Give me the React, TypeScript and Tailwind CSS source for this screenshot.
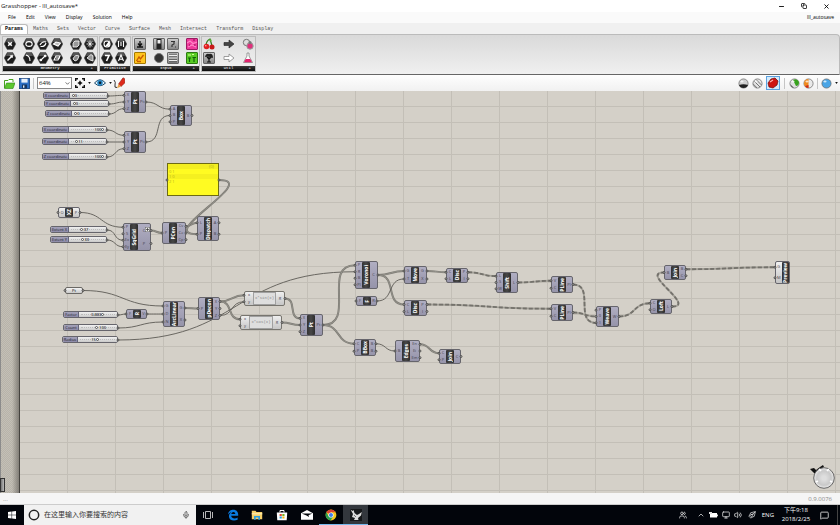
import { useState } from "react";
import type { ReactNode } from "react";
import { Mic, Minus, Copy, X, ChevronUp, Monitor, Volume2, PenTool, MessageSquare, Users } from "lucide-react";

type GhNode = {
    id: string;
    x: number;
    y: number;
    w: number;
    h: number;
    label: string;
    ins: string[];
    outs: string[];
    kind?: "light" | "expr" | "param" | "ghost";
};

type GhSlider = {
    id: string;
    x: number;
    y: number;
    w: number;
    label: string;
    labelClass: string;
    value: string;
    pos: number;
    side: "left" | "right";
};

const nodes: GhNode[] = [
    { id: "pt1", x: 124, y: 0, w: 22, h: 22, label: "Pt", ins: ["X", "Y", "Z"], outs: ["Pt"] },
    { id: "box", x: 170, y: 14, w: 22, h: 21, label: "Box", ins: ["A", "B", "P"], outs: ["B"] },
    { id: "pt2", x: 124, y: 40, w: 22, h: 22, label: "Pt", ins: ["X", "Y", "Z"], outs: ["Pt"] },
    { id: "xz", x: 58, y: 116, w: 22, h: 11, label: "XZ", ins: ["O"], outs: ["P"], kind: "light" },
    { id: "sqgrid", x: 123, y: 132, w: 28, h: 28, label: "SqGrid", ins: ["P", "S", "Ex", "Ey"], outs: ["C", "P"] },
    { id: "pcen", x: 162, y: 131, w: 24, h: 22, label: "PCen", ins: ["P"], outs: ["Cv", "Ce", "Cp"] },
    { id: "dispatch", x: 197, y: 125, w: 22, h: 25, label: "Dispatch", ins: ["L", "P"], outs: ["A", "B"] },
    { id: "ptparam", x: 65, y: 196, w: 18, h: 7, label: "Pt", ins: [""], outs: [""], kind: "param" },
    { id: "r", x: 126, y: 218, w: 21, h: 10, label: "R", ins: ["F"], outs: ["V"] },
    { id: "arc", x: 163, y: 210, w: 22, h: 26, label: "ArcLinear", ins: ["G", "D", "N"], outs: ["G", "X"] },
    { id: "decon", x: 198, y: 206, w: 22, h: 23, label: "pDecon", ins: ["P"], outs: ["X", "Y", "Z"] },
    { id: "sin", x: 244, y: 200, w: 41, h: 15, label: "x*sin(x)", ins: ["x", "y"], outs: ["R"], kind: "expr" },
    { id: "cos", x: 240, y: 224, w: 42, h: 15, label: "x*cos(x)", ins: ["x", "y"], outs: ["R"], kind: "expr" },
    { id: "pt3", x: 300, y: 223, w: 23, h: 22, label: "Pt", ins: ["X", "Y", "Z"], outs: ["Pt"] },
    { id: "voronoi", x: 355, y: 170, w: 23, h: 28, label: "Voronoi", ins: ["P", "R", "B", "Pl"], outs: ["C"] },
    { id: "f", x: 356, y: 205, w: 21, h: 10, label: "F", ins: ["F"], outs: ["R"] },
    { id: "bbox", x: 354, y: 248, w: 22, h: 17, label: "BBox", ins: ["C", "P"], outs: ["B", "B"] },
    { id: "move", x: 404, y: 175, w: 23, h: 18, label: "Move", ins: ["G", "T"], outs: ["G", "X"] },
    { id: "disc1", x: 446, y: 177, w: 22, h: 15, label: "Disc", ins: ["C", "L"], outs: ["P", "I"] },
    { id: "disc2", x: 404, y: 209, w: 23, h: 16, label: "Disc", ins: ["C", "L"], outs: ["P", "I"] },
    { id: "shift", x: 496, y: 181, w: 22, h: 21, label: "Shift", ins: ["L", "S", "W"], outs: ["L"] },
    { id: "edges", x: 395, y: 249, w: 25, h: 22, label: "Edges", ins: ["B"], outs: ["En", "Ei", "Em"] },
    { id: "join1", x: 439, y: 258, w: 22, h: 15, label: "Join", ins: ["C", "P"], outs: ["C"] },
    { id: "pl1", x: 551, y: 185, w: 22, h: 17, label: "PLine", ins: ["V", "C"], outs: ["Pl"] },
    { id: "pl2", x: 551, y: 213, w: 22, h: 17, label: "PLine", ins: ["V", "C"], outs: ["Pl"] },
    { id: "weave", x: 596, y: 215, w: 23, h: 21, label: "Weave", ins: ["P", "0", "1"], outs: ["W"] },
    { id: "loft", x: 650, y: 208, w: 22, h: 15, label: "Loft", ins: ["C", "O"], outs: ["L"] },
    { id: "join2", x: 664, y: 174, w: 22, h: 15, label: "Join", ins: ["B"], outs: ["B", "C"] },
    { id: "preview", x: 775, y: 170, w: 15, h: 23, label: "Preview", ins: ["G", "M"], outs: [], kind: "ghost" },
];

const sliders: GhSlider[] = [
    { id: "s1", x: 43, y: 1, w: 65, label: "X coordinate", labelClass: "w-[26px]", value: "0", pos: 5, side: "right" },
    { id: "s2", x: 44, y: 9, w: 65, label: "Y coordinate", labelClass: "w-[26px]", value: "0", pos: 5, side: "right" },
    { id: "s3", x: 45, y: 19, w: 64, label: "Z coordinate", labelClass: "w-[26px]", value: "0", pos: 6, side: "right" },
    { id: "s4", x: 42, y: 35, w: 65, label: "X coordinate", labelClass: "w-[26px]", value: "100", pos: 93, side: "left" },
    { id: "s5", x: 42, y: 47, w: 65, label: "Y coordinate", labelClass: "w-[26px]", value: "11", pos: 17, side: "right" },
    { id: "s6", x: 42, y: 62, w: 65, label: "Z coordinate", labelClass: "w-[26px]", value: "100", pos: 93, side: "left" },
    { id: "s7", x: 50, y: 135, w: 57, label: "Extent X", labelClass: "w-[18px]", value: "37", pos: 32, side: "right" },
    { id: "s8", x: 50, y: 145, w: 57, label: "Extent Y", labelClass: "w-[18px]", value: "33", pos: 34, side: "right" },
    { id: "s9", x: 63, y: 220, w: 55, label: "Factor", labelClass: "w-[15px]", value: "0.883", pos: 64, side: "left" },
    { id: "s10", x: 63, y: 233, w: 55, label: "Count", labelClass: "w-[15px]", value: "100", pos: 45, side: "right" },
    { id: "s11", x: 62, y: 245, w: 56, label: "Radius", labelClass: "w-[15px]", value: "15", pos: 51, side: "left" },
];

// [source, output index, target, input index, style]
const wires: [string, number, string, number, ("thin" | "list" | "tree")?][] = [
    ["s1", 0, "pt1", 0],
    ["s2", 0, "pt1", 1],
    ["s3", 0, "pt1", 2],
    ["s4", 0, "pt2", 0],
    ["s5", 0, "pt2", 1],
    ["s6", 0, "pt2", 2],
    ["pt1", 0, "box", 0],
    ["pt2", 0, "box", 1],
    ["xz", 0, "sqgrid", 0],
    ["s7", 0, "sqgrid", 2],
    ["s8", 0, "sqgrid", 3],
    ["sqgrid", 0, "pcen", 0, "list"],
    ["pcen", 0, "dispatch", 0, "list"],
    ["panel", 0, "dispatch", 1, "list"],
    ["ptparam", 0, "arc", 0],
    ["s9", 0, "r", 0],
    ["r", 0, "arc", 1],
    ["s10", 0, "arc", 2],
    ["arc", 0, "decon", 0, "list"],
    ["decon", 0, "sin", 0, "list"],
    ["decon", 2, "sin", 1],
    ["decon", 0, "cos", 0, "list"],
    ["s11", 0, "voronoi", 1],
    ["sin", 0, "pt3", 0, "list"],
    ["cos", 0, "pt3", 1, "list"],
    ["pt3", 0, "voronoi", 0, "list"],
    ["pt3", 0, "bbox", 0, "list"],
    ["voronoi", 0, "move", 0, "list"],
    ["voronoi", 0, "disc2", 0, "list"],
    ["f", 0, "move", 1],
    ["move", 0, "disc1", 0, "list"],
    ["disc1", 0, "shift", 0, "tree"],
    ["disc2", 0, "pl2", 0, "tree"],
    ["shift", 0, "pl1", 0, "tree"],
    ["pl1", 0, "weave", 2, "tree"],
    ["pl2", 0, "weave", 1, "tree"],
    ["weave", 0, "loft", 0, "tree"],
    ["loft", 0, "join2", 0, "tree"],
    ["join2", 0, "preview", 0, "tree"],
    ["bbox", 0, "edges", 0],
    ["edges", 0, "join1", 0, "list"],
];

const panel = { x: 167, y: 72, w: 52, h: 33 };

function portY(y: number, h: number, i: number, n: number) {
    return y + 1 + ((h - 2) * (i + 0.5)) / n;
}

function outPort(id: string, i: number): [number, number] {
    if (id === "panel") return [panel.x + panel.w, panel.y + 17];
    const s = sliders.find((v) => v.id === id);
    if (s) return [s.x + s.w, s.y + 4];
    const n = nodes.find((v) => v.id === id)!;
    return [n.x + n.w, portY(n.y, n.h, i, n.outs.length)];
}

function inPort(id: string, i: number): [number, number] {
    const n = nodes.find((v) => v.id === id)!;
    return [n.x, portY(n.y, n.h, i, n.ins.length)];
}

function wirePath([x1, y1]: [number, number], [x2, y2]: [number, number]) {
    const dist = Math.hypot(x2 - x1, y2 - y1);
    const c = x2 < x1 ? dist * 0.72 : dist * 0.5;
    return `M${x1} ${y1}C${x1 + c} ${y1} ${x2 - c} ${y2} ${x2} ${y2}`;
}

function Wires() {
    return (
        <svg className="absolute inset-0 w-full h-full" fill="none" stroke="#5c5a55">
            {wires.map(([a, ai, b, bi, style], i) => {
                const d = wirePath(outPort(a, ai), inPort(b, bi));
                if (style === "tree")
                    return (
                        <g key={i}>
                            <path d={d} stroke="#a3a098" strokeWidth="1.8" />
                            <path d={d} stroke="#74726c" strokeWidth="1.8" strokeDasharray="4 2" />
                        </g>
                    );
                if (style === "list")
                    return (
                        <g key={i}>
                            <path d={d} stroke="#7b7973" strokeWidth="2" />
                            <path d={d} stroke="#a5a29a" strokeWidth="0.6" />
                        </g>
                    );
                return <path key={i} d={d} strokeWidth="0.9" />;
            })}
        </svg>
    );
}

function Ports() {
    const points: [number, number][] = [
        [panel.x, panel.y + 17],
        [panel.x + panel.w, panel.y + 17],
    ];
    sliders.forEach((s) => points.push(outPort(s.id, 0)));
    nodes.forEach((n) => {
        n.ins.forEach((_, i) => points.push(inPort(n.id, i)));
        n.outs.forEach((_, i) => points.push(outPort(n.id, i)));
    });
    return (
        <svg className="absolute inset-0 w-full h-full" fill="#b9b7b2" stroke="#3c3c3c" strokeWidth="0.8">
            {points.map(([x, y], i) => (
                <circle key={i} cx={x} cy={y} r="1" />
            ))}
        </svg>
    );
}

function PortNames({ names, className }: { names: string[]; className: string }) {
    return (
        <div className={`flex flex-col text-[4px] leading-[4px] text-[#45434f] ${className}`}>
            {names.map((name, i) => (
                <span key={i} className="flex-1 flex items-center justify-center">
                    {name}
                </span>
            ))}
        </div>
    );
}

function Component({ node }: { node: GhNode }) {
    const box = { left: node.x, top: node.y, width: node.w, height: node.h };
    if (node.kind === "param")
        return (
            <div
                style={box}
                className="absolute flex items-center justify-center rounded-[2px] border border-[#6b6965] bg-gradient-to-b from-[#f4f4f4] to-[#c9c9c9] text-[4px] leading-[4px]"
            >
                {node.label}
            </div>
        );
    if (node.kind === "expr")
        return (
            <div style={box} className="absolute flex rounded-[2px] border border-[#77756f] bg-gradient-to-b from-[#efefef] to-[#c6c6c6]">
                <PortNames names={node.ins} className="w-2" />
                <div className="flex-1 flex items-center justify-center border border-[#a0a0a0] bg-[#dedede] text-[4px] leading-[5px] text-[#888] font-['Liberation_Mono',monospace]">
                    {node.label}
                </div>
                <PortNames names={node.outs} className="w-2" />
            </div>
        );
    const light = node.kind === "light" || node.kind === "ghost";
    return (
        <div
            style={box}
            className={`absolute flex rounded-[2px] border border-[#66656c] bg-gradient-to-b ${light ? "from-[#f2f2f2] to-[#c4c4c4]" : "from-[#b0aec2] to-[#9694aa]"}`}
        >
            <PortNames names={node.ins} className="w-[6px]" />
            <div className="w-2 flex items-center justify-center overflow-hidden rounded-[1px] bg-gradient-to-r from-[#333] via-[#484848] to-[#2c2c2c] text-white font-bold text-[5px] leading-[6px]">
                <span className="[writing-mode:vertical-rl] rotate-180 whitespace-nowrap">{node.label}</span>
            </div>
            <PortNames names={node.outs} className="flex-1" />
        </div>
    );
}

function NumberSlider({ slider }: { slider: GhSlider }) {
    const [pos, setPos] = useState(slider.pos);
    return (
        <div
            style={{ left: slider.x, top: slider.y, width: slider.w }}
            className="absolute h-[7px] flex rounded-[2px] border border-[#66656c] bg-[#dcdcdc] overflow-hidden"
        >
            <label
                htmlFor={slider.id}
                className={`${slider.labelClass} shrink-0 flex items-center justify-center border-r border-[#66657a] bg-gradient-to-b from-[#a3a1b8] to-[#8d8ba8] text-[4px] leading-[5px] text-[#23222d] whitespace-nowrap`}
            >
                {slider.label}
            </label>
            <div className="relative flex-1 bg-gradient-to-b from-[#f1f1f1] to-[#cacaca]">
                <div className="absolute inset-x-0.5 top-0.5 border-t border-dotted border-[#bbb]" />
                <input
                    id={slider.id}
                    type="range"
                    value={pos}
                    onChange={(e) => setPos(Number(e.target.value))}
                    className="absolute inset-0 w-full h-[5px] appearance-none bg-transparent [&::-webkit-slider-thumb]:appearance-none [&::-webkit-slider-thumb]:w-[3px] [&::-webkit-slider-thumb]:h-[3px] [&::-webkit-slider-thumb]:rounded-full [&::-webkit-slider-thumb]:border [&::-webkit-slider-thumb]:border-[#555] [&::-webkit-slider-thumb]:bg-white"
                />
                <span
                    style={slider.side === "right" ? { left: `calc(${pos}% + 3px)` } : { right: `calc(${100 - pos}% + 2px)` }}
                    className="absolute inset-y-0 text-[4px] leading-[5px] text-black pointer-events-none"
                >
                    {slider.value}
                </span>
            </div>
        </div>
    );
}

function Canvas() {
    return (
        <main className="relative flex-1 min-h-0 overflow-hidden bg-[#d4d0c8] text-black">
            <svg className="absolute inset-0 w-full h-full">
                <defs>
                    <pattern id="grid" x="67" y="15" width="48" height="16" patternUnits="userSpaceOnUse">
                        <path d="M.5 0V16M0 .5H48" stroke="#c3bfb7" fill="none" />
                    </pattern>
                    <pattern id="weave" width="2" height="2" patternUnits="userSpaceOnUse">
                        <path d="M0 0H1V1H0ZM1 1H2V2H1Z" fill="#aba79e" />
                    </pattern>
                    <linearGradient id="edge">
                        <stop offset="0" stopColor="#6f6c66" stopOpacity="0" />
                        <stop offset="1" stopColor="#6f6c66" stopOpacity="0.85" />
                    </linearGradient>
                </defs>
                <rect width="100%" height="100%" fill="url(#grid)" />
                <rect width="20" height="100%" fill="#c3bfb6" />
                <rect width="20" height="100%" fill="url(#weave)" opacity="0.5" />
                <rect x="12" width="8" height="100%" fill="url(#edge)" />
                <rect x="19" width="1" height="100%" fill="#45433f" />
                <rect width="1" height="100%" fill="#8b8b8b" />
            </svg>
            <Wires />
            {sliders.map((s) => (
                <NumberSlider key={s.id} slider={s} />
            ))}
            {nodes.map((n) => (
                <Component key={n.id} node={n} />
            ))}
            <div
                style={{ left: panel.x, top: panel.y, width: panel.w, height: panel.h }}
                className="absolute border border-[#6d6a14] bg-[#fffb22] text-[4px] leading-[5px] text-[#b5b01c]"
            >
                <p className="pr-1 text-right bg-[#f3ee20]">{"{0}"}</p>
                <p className="pl-px">0 1</p>
                <p className="pl-px bg-[#f5f020]">1 0</p>
                <p className="pl-px">2 1</p>
            </div>
            <svg className="absolute left-[145px] top-[136px] w-[5px] h-[5px]" viewBox="0 0 5 5">
                <rect width="5" height="5" fill="#eee" stroke="#555" />
                <path d="M2.5 1V4M1 2.5H4" stroke="#333" strokeWidth=".7" />
            </svg>
            <Ports />
            <div className="absolute left-0 bottom-px w-[5px] h-[14px] border border-[#333] bg-gradient-to-r from-[#777] to-[#bbb]" />
            <svg className="absolute right-1 bottom-[3px] w-[26px] h-[26px]" viewBox="0 0 26 26">
                <defs>
                    <radialGradient id="dial">
                        <stop offset="0.2" stopColor="#dedede" />
                        <stop offset="0.7" stopColor="#c9c9c9" />
                        <stop offset="1" stopColor="#ededed" />
                    </radialGradient>
                </defs>
                <path d="M0 5L4 4L6 6L10 3L13 1L14 3L9 6L5 10L3 8Z" fill="#111" />
                <circle cx="14" cy="14" r="10.3" fill="url(#dial)" stroke="#666" />
                <path d="M9 5L11 7M19 5L17 7M6 18L8 17M22 18L20 17" stroke="#fff" strokeWidth="1.6" />
            </svg>
        </main>
    );
}

function Hex({ title, children }: { title: string; children: ReactNode }) {
    return (
        <button title={title} className="w-3 h-3 block">
            <svg viewBox="0 0 12 12" className="w-3 h-3">
                <path d="M3.2 .5H8.8L11.8 6L8.8 11.5H3.2L.2 6Z" fill="#1d1d1d" stroke="#555" strokeWidth=".5" />
                <path d="M3.4 1H8.6L10 4H2Z" fill="#555" />
                <g fill="none" stroke="#fff" strokeWidth="1.1">
                    {children}
                </g>
            </svg>
        </button>
    );
}

function Tile({ title, className, children }: { title: string; className: string; children: ReactNode }) {
    return (
        <button title={title} className={`w-3 h-3 block rounded-[1px] border ${className}`}>
            <svg viewBox="0 0 10 10" className="w-full h-full">
                {children}
            </svg>
        </button>
    );
}

function Plain({ title, children }: { title: string; children: ReactNode }) {
    return (
        <button title={title} className="w-3 h-3 block">
            <svg viewBox="0 0 12 12" className="w-3 h-3">
                {children}
            </svg>
        </button>
    );
}

function Group({ name, more, className, children }: { name: string; more?: boolean; className: string; children: ReactNode }) {
    return (
        <section className={`flex flex-col h-9 border border-[#bcbcbc] bg-gradient-to-b from-[#dedede] to-[#f2f2f2] ${className}`}>
            <div className="flex-1 flex justify-between px-px">{children}</div>
            <h2 className="relative h-[5px] bg-gradient-to-b from-[#3a3a3a] to-[#0d0d0d] text-center text-white text-[4px] leading-[5px] font-['Liberation_Mono',monospace]">
                {name}
                {more && <span className="absolute right-1">+</span>}
            </h2>
        </section>
    );
}

function Cols({ children, cols }: { children: ReactNode; cols: string }) {
    return <div className={`grid ${cols} gap-0.5 content-start pt-px`}>{children}</div>;
}

const grey = "border-[#666] bg-gradient-to-b from-[#ccc] to-[#888]";

function Ribbon() {
    return (
        <div className="h-[41px] flex items-start gap-px pl-0.5 pt-px border-t border-r border-b border-[#bbb] border-b-[#666] rounded-tr bg-gradient-to-b from-[#d9d9d9] to-[#f0f0f0]">
            <Group name="Geometry" more className="w-24">
                <Cols cols="grid-cols-1">
                    <Hex title="Geometry"><path d="M4.2 4.2L7.8 7.8M7.8 4.2L4.2 7.8" strokeWidth="1.6" /></Hex>
                    <Hex title="Vector"><path d="M3.5 8.5L8.3 3.7" strokeWidth="1.4" /><path d="M8.8 3.2L8.3 6L6 3.7Z" fill="#fff" strokeWidth=".4" /></Hex>
                </Cols>
                <Cols cols="grid-cols-3">
                    <Hex title="Circle"><ellipse cx="6" cy="6" rx="3.2" ry="2.4" /></Hex>
                    <Hex title="Circular Arc"><path d="M3 7Q5 3 9 4M3.5 8.5Q8 9 9 5" /></Hex>
                    <Hex title="Plane"><path d="M2.5 6L5 4L9.5 5L7 8Z" fill="#bbb" /></Hex>
                    <Hex title="Curve"><path d="M3 3Q7 4 7 9" /></Hex>
                    <Hex title="Line"><path d="M3.5 8.5L8.5 3.5" /><circle cx="3.8" cy="8" r=".8" /><circle cx="8.2" cy="4" r=".8" /></Hex>
                    <Hex title="Rectangle"><path d="M3 8L5 4L9 4L7 8ZM5 6H9" /></Hex>
                </Cols>
                <Cols cols="grid-cols-2">
                    <Hex title="Box"><path d="M3 5L5 3H9V7L7 9H3Z" fill="#999" strokeWidth=".8" /></Hex>
                    <Hex title="Mesh"><path d="M6 2.5V9.5M2.5 6H9.5M4 3.5L8 8.5M8 3.5L4 8.5" strokeWidth=".8" /></Hex>
                    <Hex title="Surface"><path d="M3 7Q5 2 9 4Q8 9 5 9Z" fill="#888" strokeWidth=".8" /></Hex>
                    <Hex title="Twisted Box"><path d="M3 6L7 2.5L9 4V9L6 8Z" fill="#999" strokeWidth=".8" /></Hex>
                </Cols>
            </Group>
            <Group name="Primitive" className="w-8">
                <Cols cols="grid-cols-2">
                    <Hex title="Boolean"><circle cx="6" cy="6" r="3" /><path d="M5 8L8 4L8 7Z" fill="#fff" /></Hex>
                    <Hex title="Domain"><path d="M3.5 3V9M6 4V8M8.5 3V9" /></Hex>
                    <Hex title="Integer"><path d="M4 3.5H8L5.5 9" strokeWidth="1.6" /></Hex>
                    <Hex title="Text"><path d="M3.5 9L6 3L8.5 9M4.5 7.2H7.5" /></Hex>
                </Cols>
            </Group>
            <Group name="Input" more className="w-[68px]">
                <Cols cols="grid-cols-1">
                    <Tile title="Button" className={grey}><path d="M5 2V6M3 4.5L5 7L7 4.5M2 8H8" stroke="#111" strokeWidth="1.3" fill="none" /></Tile>
                    <Tile title="Graph Mapper" className="border-[#a57a00] bg-[#ffc41e]"><path d="M1.5 8L4 4L5.5 6L8.5 2M2 8.5H6" stroke="#c85a00" strokeWidth="1.3" fill="none" /></Tile>
                </Cols>
                <Cols cols="grid-cols-2">
                    <Tile title="Boolean Toggle" className={grey}><rect x="2.5" y="0" width="5" height="10" fill="#222" /><rect x="3.5" y="1" width="3" height="3.5" fill="#eee" /></Tile>
                    <Tile title="Digit Scroller" className={grey}><path d="M3 2.5H7M6 3V5L4 6V8M7 8H8" stroke="#333" strokeWidth="1.2" fill="none" /></Tile>
                    <Tile title="Control Knob" className="border-transparent"><circle cx="5" cy="5" r="4.5" fill="#333" stroke="#777" strokeWidth="1" /></Tile>
                    <Tile title="Value List" className={grey}><path d="M1 2.5H9M1 5H9M1 7.5H9" stroke="#eee" strokeWidth="1" /><path d="M1 1.2H9M1 3.8H9M1 6.3H9M1 8.8H9" stroke="#444" strokeWidth=".8" /></Tile>
                </Cols>
                <Cols cols="grid-cols-1">
                    <Tile title="Colour Swatch" className="border-[#9a1c62] bg-[#f03a9c]"><path d="M0 4L3 2L6 4.5L10 3M1 8L5 6L9 8" stroke="#ff86c6" strokeWidth="1.2" fill="none" /><path d="M6 1H8M2 6H3M7 6H8.5" stroke="#8a0a4c" /></Tile>
                    <Tile title="Image Sampler" className="border-[#2d7a12] bg-[#58cc24]"><path d="M2.5 9V5.5M7 9V5M1 5H4M5.5 4.5H9" stroke="#12620a" strokeWidth="1.2" fill="none" /><path d="M1 2H4M5 1.5H7" stroke="#d6ff9a" /></Tile>
                </Cols>
            </Group>
            <Group name="Util" more className="w-[55px]">
                <Cols cols="grid-cols-1">
                    <Plain title="Cherry Picker"><path d="M3 8Q3 3 7 1Q8 4 9 8" stroke="#2f7a1c" strokeWidth="1.2" fill="none" /><path d="M6 1L9 2L7 4Z" fill="#59b52c" /><circle cx="3.5" cy="8.5" r="2.8" fill="#e02020" /><circle cx="9" cy="9" r="2.5" fill="#c81818" /><circle cx="2.8" cy="7.8" r=".8" fill="#ffb0b0" /></Plain>
                    <Tile title="Data Dam" className={grey}><path d="M5 9V4M5 6L3 4M5 6L7.5 4M3 9H7" stroke="#111" strokeWidth="1.2" fill="none" /><path d="M1 4Q2 0 5 1Q9 0 9 5Q5 3 1 4Z" fill="#222" /></Tile>
                </Cols>
                <Cols cols="grid-cols-1">
                    <Plain title="Relay"><path d="M1 4.5H6V2L11 6L6 10V7.5H1Z" fill="#444" stroke="#222" strokeWidth=".6" /></Plain>
                    <Plain title="Jump"><path d="M1 4.5H6V2L11 6L6 10V7.5H1Z" fill="#fff" stroke="#888" strokeWidth=".8" /></Plain>
                </Cols>
                <Cols cols="grid-cols-1">
                    <Plain title="Cluster Input"><circle cx="4.5" cy="4.5" r="3.2" fill="#ddd" stroke="#777" /><circle cx="8" cy="8" r="3.2" fill="#e0307c" stroke="#999" /><circle cx="8" cy="4.5" r="1.6" fill="#777" /></Plain>
                    <Plain title="Galapagos"><path d="M5 1H7V4L10.5 10.5H1.5L5 4Z" fill="#fff" stroke="#777" strokeWidth=".7" /><path d="M3.7 7H8.3L10 10.3H2Z" fill="#e2246f" /></Plain>
                </Cols>
            </Group>
        </div>
    );
}

const tabs = ["Params", "Maths", "Sets", "Vector", "Curve", "Surface", "Mesh", "Intersect", "Transform", "Display"];
const menus = ["File", "Edit", "View", "Display", "Solution", "Help"];

function Header() {
    const [active, setActive] = useState("Params");
    return (
        <header>
            <div className="h-3 flex items-center justify-between pl-px bg-white">
                <h1 className="text-[6px] leading-3">Grasshopper - lll_autosave*</h1>
                <div className="flex items-center gap-4 pr-2.5 text-black">
                    <button title="Minimize"><Minus size={7} strokeWidth={3} /></button>
                    <button title="Restore" className="-scale-x-100"><Copy size={6} strokeWidth={3} className="-scale-x-100" /></button>
                    <button title="Close"><X size={7} strokeWidth={3} /></button>
                </div>
            </div>
            <nav className="h-[11px] flex items-center justify-between pl-2 pr-1.5 bg-[#fafafa] text-[5px] leading-[11px] text-black">
                <div className="flex gap-2.5">
                    {menus.map((m) => (
                        <button key={m}>{m}</button>
                    ))}
                </div>
                <span>lll_autosave</span>
            </nav>
            <div className="h-[11px] flex items-end gap-px bg-[#f0f0f0] text-[5px] leading-[9px] font-['Liberation_Mono',monospace] text-[#555]">
                {tabs.map((t) => (
                    <button
                        key={t}
                        onClick={() => setActive(t)}
                        className={active === t ? "h-[10px] px-1 rounded-t-[3px] border border-b-0 border-[#bbb] bg-white text-black font-bold" : "h-[10px] px-1"}
                    >
                        {t}
                    </button>
                ))}
            </div>
            <Ribbon />
        </header>
    );
}

function Caret() {
    return (
        <svg viewBox="0 0 4 3" className="w-[3px] h-[2px]">
            <path d="M0 0H4L2 3Z" fill="#111" />
        </svg>
    );
}

function Ball({ title, color, children }: { title: string; color: string; children?: ReactNode }) {
    return (
        <button title={title}>
            <svg viewBox="0 0 11 11" className="w-[11px] h-[11px]">
                <circle cx="5.5" cy="5.5" r="4.6" fill={color} stroke="#666" strokeWidth=".7" />
                {children}
                <ellipse cx="4" cy="3.4" rx="1.6" ry="1" fill="#fff" opacity=".75" />
            </svg>
        </button>
    );
}

function Toolbar() {
    return (
        <div className="h-4 flex items-center justify-between pl-1 pr-0.5 bg-gradient-to-b from-[#fefefe] to-[#f1f1f1]">
            <div className="flex items-center">
                <button title="Open" className="mr-1">
                    <svg viewBox="0 0 11 11" className="w-[11px] h-[11px]">
                        <path d="M.5 10V2.5H4L5 1.5H9V4" fill="#fff" stroke="#46a31f" />
                        <path d="M.5 10.5L2.5 5H11L9 10.5Z" fill="#5cc62e" stroke="#2e8412" strokeWidth=".6" />
                    </svg>
                </button>
                <button title="Save">
                    <svg viewBox="0 0 11 11" className="w-[11px] h-[11px]">
                        <rect x=".4" y=".4" width="10.2" height="10.2" fill="#2c6fc4" stroke="#173f77" strokeWidth=".8" />
                        <rect x="2.4" y=".8" width="6.2" height="3.8" fill="#e8f1fb" />
                        <rect x="3" y="6.5" width="5" height="4" fill="#16365f" />
                        <rect x="4" y="7.4" width="1.4" height="2.4" fill="#dce8f5" />
                    </svg>
                </button>
                <span className="w-px h-[11px] mx-[3px] bg-[#c5c5c5]" />
                <div className="relative flex items-center">
                    <select
                        aria-label="Zoom"
                        defaultValue="64%"
                        className="w-[35px] h-3 pl-px appearance-none border border-[#888] bg-white text-[6px] leading-[10px]"
                    >
                        <option>64%</option>
                        <option>100%</option>
                    </select>
                    <svg viewBox="0 0 6 4" className="absolute right-0.5 w-[5px] h-[3px] pointer-events-none">
                        <path d="M.5 .5L3 3L5.5 .5" stroke="#444" fill="none" />
                    </svg>
                </div>
                <button title="Zoom Extents" className="flex items-center gap-[3px] ml-[3px]">
                    <svg viewBox="0 0 10 10" className="w-2.5 h-2.5">
                        <path d="M.7 3V.7H3M7 .7H9.3V3M9.3 7V9.3H7M3 9.3H.7V7" stroke="#111" strokeWidth="1.4" fill="none" />
                        <path d="M5 2.3L6 4L7.7 5L6 6L5 7.7L4 6L2.3 5L4 4Z" fill="#111" />
                    </svg>
                    <Caret />
                </button>
                <button title="Named Views" className="flex items-center gap-[3px] ml-[3px]">
                    <svg viewBox="0 0 12 10" className="w-3 h-2.5">
                        <path d="M.5 5Q6 -1.5 11.5 5Q6 10.5 .5 5Z" fill="#e8f4fb" stroke="#1b4768" />
                        <circle cx="6" cy="4.8" r="2.8" fill="#2a8ac8" />
                        <circle cx="6" cy="4.8" r="1.3" fill="#0a1c2c" />
                    </svg>
                    <Caret />
                </button>
                <button title="Sketch" className="ml-px">
                    <svg viewBox="0 0 12 12" className="w-3 h-3">
                        <path d="M1 3Q3 5 2 8Q1 11 4 10.5" stroke="#333" fill="none" />
                        <path d="M5.5 7L10 .8L11.8 1.8V6L8 9.5Z" fill="#de2a1b" stroke="#7c150b" strokeWidth=".5" />
                        <path d="M5.5 7L8 9.5L4 11.2Z" fill="#e6a04a" />
                    </svg>
                </button>
            </div>
            <div className="flex items-center gap-[3px]">
                <Ball title="No preview" color="#cfcfcf"><path d="M1 7Q5.5 5.5 10 7Q9 10 5.5 10Q2 10 1 7Z" fill="#222" /></Ball>
                <Ball title="Wireframe preview" color="#e4e4e4"><path d="M2 3L8 9M4 1.5L9.5 7M1.2 6L5 9.8" stroke="#666" strokeWidth=".9" /></Ball>
                <div className="w-[14px] h-[14px] flex items-center justify-center border border-[#5ba3e0] bg-[#d5e9fa]">
                    <button title="Shaded preview">
                        <svg viewBox="0 0 12 12" className="w-3 h-3">
                            <path d="M1 6L4 2L8 1L11 4L10 8L6 11L2 10Z" fill="#cf1512" stroke="#6d0806" strokeWidth=".7" />
                            <path d="M3 5L6 3" stroke="#ffb3ad" strokeWidth="1.2" />
                        </svg>
                    </button>
                </div>
                <span className="w-px h-[11px] mx-px bg-[#c5c5c5]" />
                <Ball title="Selected preview" color="#dedede"><path d="M4 2Q8 0 10 4Q10 8 7 8Z" fill="#36a11c" /><path d="M1 6L5 10Q2 9 1 6Z" fill="#333" /></Ball>
                <Ball title="Document preview" color="#e9e9e9"><path d="M5.5 1A4.5 4.5 0 0 0 5.5 10Z" fill="#f08a1c" /><path d="M2 8L5.5 7V10Q3 10 2 8Z" fill="#c9291a" /></Ball>
                <span className="w-px h-[11px] bg-[#c5c5c5]" />
                <Ball title="Preview quality" color="#4aa5e6" />
                <Caret />
            </div>
        </div>
    );
}

function TaskButton({ title, state, children }: { title: string; state?: string; children: ReactNode }) {
    return (
        <button title={title} className={`flex-1 h-full flex items-center justify-center border-b ${state ?? "border-transparent"}`}>
            <svg viewBox="0 0 12 12" className="w-3 h-3">
                {children}
            </svg>
        </button>
    );
}

function Taskbar() {
    return (
        <footer className="h-5 flex items-center bg-[#02050b] text-white">
            <button title="Start" className="w-6 h-full flex items-center justify-center">
                <svg viewBox="0 0 8 8" className="w-2 h-2" fill="#fff">
                    <path d="M0 1L3.6 .5V3.7H0ZM4.1 .4L8 0V3.7H4.1ZM0 4.2H3.6V7.4L0 7ZM4.1 4.2H8V8L4.1 7.5Z" />
                </svg>
            </button>
            <label className="w-[172px] h-full flex items-center gap-1 pl-1 pr-1.5 bg-[#f1f1f1] text-[#333]">
                <svg viewBox="0 0 12 12" className="w-3 h-3 shrink-0">
                    <circle cx="6" cy="6" r="4.7" fill="none" stroke="#222" strokeWidth="1.5" />
                </svg>
                <input
                    aria-label="搜索"
                    placeholder="在这里输入你要搜索的内容"
                    className="flex-1 min-w-0 bg-transparent text-[7px] leading-[10px] placeholder:text-[#333] outline-none"
                />
                <Mic size={8} strokeWidth={2} />
            </label>
            <div className="w-[172px] h-full flex">
                <TaskButton title="Task View">
                    <path d="M3.5 2.5H8.5V9.5H3.5ZM1.5 3V9M10.5 3V9" stroke="#ccc" strokeWidth=".9" fill="none" />
                </TaskButton>
                <TaskButton title="Edge">
                    <path d="M1 5.5C1.5 2 4 .7 6.3 .7C9.5 .7 11.2 3 11.2 5.5V6.8H4.2C4.3 8.8 6 9.4 7.5 9.4C8.8 9.4 9.8 9 10.6 8.5V10.7C9.5 11.3 8.3 11.5 7 11.5C4 11.5 1.9 10 1.9 7.2C1.9 5.3 3 4 4.4 3.2C2.8 3.4 1.8 4.3 1 5.5ZM4.3 5H8.3C8.3 3.7 7.5 3 6.4 3C5.2 3 4.5 4 4.3 5Z" fill="#0a7be0" />
                </TaskButton>
                <TaskButton title="File Explorer">
                    <path d="M.8 1.8H4.5L5.5 3H11.2V10.3H.8Z" fill="#f6d06a" />
                    <path d="M.8 4H11.2V5.5H.8Z" fill="#fbe7a4" />
                    <path d="M3 10.8V7H9V10.8H7.3V8.6H4.7V10.8Z" fill="#2ea2e0" />
                </TaskButton>
                <TaskButton title="Store">
                    <path d="M4 3.5V1.5H8V3.5" stroke="#fff" fill="none" />
                    <path d="M.8 3.5H11.2L10.7 11.2H1.3Z" fill="#fff" />
                    <path d="M3.6 5H5.8V7H3.6Z" fill="#e8482b" />
                    <path d="M6.3 5H8.5V7H6.3Z" fill="#77b51d" />
                    <path d="M3.6 7.5H5.8V9.5H3.6Z" fill="#209fe4" />
                    <path d="M6.3 7.5H8.5V9.5H6.3Z" fill="#f8b616" />
                </TaskButton>
                <TaskButton title="Mail">
                    <path d="M0 4.2L6 1L12 4.2V10.8H0Z" fill="#fff" />
                    <path d="M.6 4.4H11.4L7.5 6.2L8 8L5.5 6.4Z" fill="#05080d" />
                </TaskButton>
                <TaskButton title="Chrome" state="border-[#76b9ed]">
                    <circle cx="6" cy="6" r="5.4" fill="#f6c61b" />
                    <path d="M6 6L1.3 3.3A5.4 5.4 0 0 1 10.7 3.3H6Z" fill="#dd4231" />
                    <path d="M1.3 3.3A5.4 5.4 0 0 0 5.6 11.4L8.2 7.2L6 6L3.7 7.2Z" fill="#2a9e4f" />
                    <circle cx="6" cy="6" r="2.6" fill="#fff" />
                    <circle cx="6" cy="6" r="2" fill="#3f7fe8" />
                </TaskButton>
                <TaskButton title="Rhinoceros" state="border-[#76b9ed] bg-[#33373d]">
                    <rect width="12" height="12" fill="#16181a" />
                    <path d="M.5 .5L2.5 2L3.5 1L4.5 4L7 6L9 5L11.8 3L11 6.5L8 9L8.5 11H4L5 9L2 8L3 5Z" fill="#dcdcdc" />
                    <path d="M4 6L6 8" stroke="#777" />
                </TaskButton>
            </div>
            <div className="ml-auto flex items-center gap-1 pr-0.5">
                <Users size={8} className="mr-1.5" />
                <ChevronUp size={8} />
                <svg viewBox="0 0 9 8" className="w-[9px] h-2">
                    <path d="M1 2H8V6.5H1Z" fill="#fff" />
                    <path d="M0 1H3V3H0ZM8 3.4H9V5.2H8Z" fill="#ddd" />
                </svg>
                <Monitor size={8} />
                <Volume2 size={8} />
                <PenTool size={8} className="ml-0.5 -scale-x-100" />
                <span className="ml-0.5 text-[6px] leading-2">ENG</span>
                <time className="ml-0.5 w-8 text-center text-[6px] leading-[9px]">
                    下午9:18
                    <br />
                    2018/2/25
                </time>
                <MessageSquare size={9} className="mx-1" />
                <span className="w-px h-5 bg-[#444]" />
            </div>
        </footer>
    );
}

export default function App() {
    return (
        <div className="h-screen flex flex-col overflow-hidden bg-[#f0f0f0] text-[#111] font-['Open_Sans','Noto_Sans_CJK_SC',sans-serif]">
            <Header />
            <Toolbar />
            <Canvas />
            <div className="h-3 flex items-center justify-between pl-[3px] pr-2 border-b border-[#ccc] bg-[#f5f5f5] text-[6px] leading-3 text-[#888]">
                <span>...</span>
                <span>0.9.0076</span>
            </div>
            <Taskbar />
        </div>
    );
}
